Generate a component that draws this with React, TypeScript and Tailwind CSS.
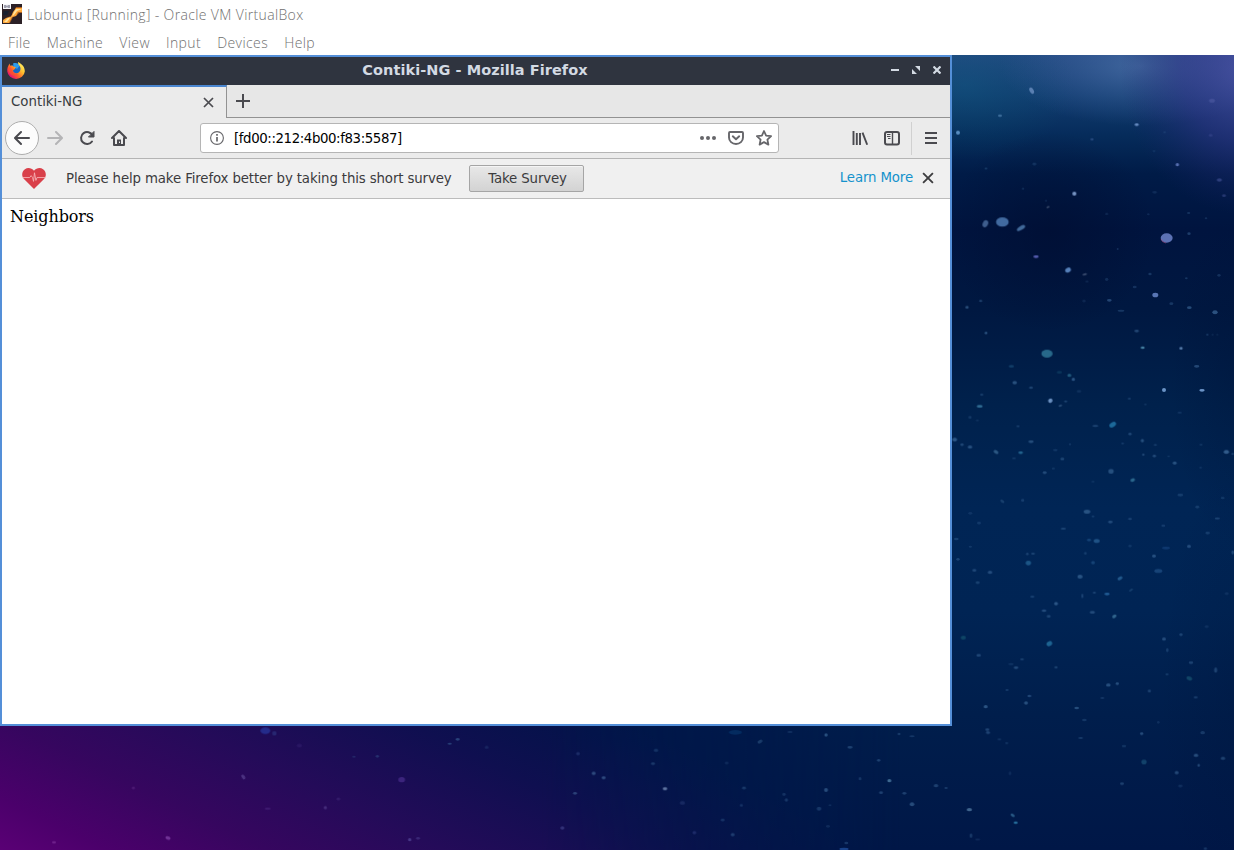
import React from "react";

type Star = [x: number, y: number, rx: number, ry: number, opacity: number, color?: string, angle?: number];

const UPPER: Star[] = [
  [305, 122, 10, 6, 0.75, "#7f9fd0", 60], [210, 197, 6, 4, 0.7, "#5a8ab8"], [84, 248, 6, 6, 0.9, "#6ea6dc"],
  [620, 224, 6, 4, 0.9, "#7fa4dc"], [486, 268, 5, 4, 0.5, "#4d6eaa"], [846, 152, 9, 6, 0.6, "#5560a8"],
  [842, 256, 6, 4, 0.35, "#5560a8"], [742, 344, 5, 5, 0.8, "#7890d8"], [868, 390, 8, 5, 0.6, "#4d5ca0"],
  [882, 437, 6, 4, 0.5, "#4d5ca0"], [704, 247, 4, 3, 0.3], [672, 303, 4, 3, 0.3], [313, 342, 6, 4, 0.35],
  [168, 355, 4, 3, 0.45], [279, 416, 3, 3, 0.4], [348, 452, 3, 2, 0.4], [354, 471, 5, 3, 0.55, "#6f7f98", -20],
  [433, 431, 6, 6, 0.95, "#8fb0e0"], [166, 521, 11, 8, 0.75, "#5f86b8", -65], [217, 516, 19, 14, 0.95, "#4f7cb4"],
  [273, 534, 14, 6, 0.8, "#5c8fc2", -32], [318, 620, 8, 4, 0.85, "#7277d8"], [414, 660, 9, 7, 0.9, "#6b9ddc", -30],
  [464, 673, 7, 3, 0.55, "#7182a0", -15], [710, 564, 18, 14, 0.95, "#6f86cc"], [777, 551, 5, 4, 0.5],
  [776, 489, 5, 3, 0.35], [530, 492, 5, 3, 0.3], [655, 493, 4, 3, 0.25], [828, 505, 4, 3, 0.3],
  [563, 597, 3, 3, 0.35], [530, 688, 5, 5, 0.3], [660, 672, 5, 4, 0.4], [614, 711, 6, 4, 0.35],
  [676, 735, 9, 7, 0.9, "#708fd4"], [538, 751, 7, 4, 0.6], [573, 782, 10, 3, 0.4], [724, 761, 6, 4, 0.4],
  [778, 773, 7, 4, 0.65], [855, 787, 8, 6, 0.75], [867, 676, 5, 4, 0.35], [769, 685, 4, 3, 0.4],
  [152, 753, 5, 3, 0.6], [111, 772, 5, 4, 0.7], [462, 753, 5, 4, 0.25], [674, 427, 7, 4, 0.25], [471, 695, 5, 3, 0.25],
];

const MIDDLE: Star[] = [
  [168, 39, 4, 4, 0.75], [351, 101, 17, 12, 0.95, "#2f7898"], [244, 139, 8, 4, 0.5, "#27668f"], [254, 188, 7, 5, 0.7],
  [303, 203, 6, 4, 0.5], [418, 166, 6, 5, 0.7, "#337c9b"], [430, 178, 5, 5, 0.75], [388, 157, 8, 4, 0.35, "#236b86"],
  [155, 224, 5, 4, 0.4], [149, 259, 9, 4, 0.85, "#4186ab"], [361, 242, 7, 6, 0.95, "#7fa6d8", -35],
  [391, 257, 6, 3, 0.5, "#547aa3", -25], [407, 244, 5, 3, 0.5], [447, 214, 7, 4, 0.25], [120, 292, 5, 4, 0.35],
  [142, 301, 5, 3, 0.25], [264, 319, 5, 3, 0.4], [303, 365, 8, 4, 0.65], [272, 398, 7, 4, 0.75, "#3687b0"],
  [198, 396, 8, 5, 0.7, "#4779a4", 35], [120, 381, 7, 5, 0.65], [96, 374, 5, 4, 0.55], [74, 359, 7, 6, 0.75],
  [397, 417, 6, 4, 0.5], [376, 390, 7, 3, 0.35], [252, 415, 6, 3, 0.3], [344, 458, 6, 4, 0.6],
  [370, 446, 5, 3, 0.3], [420, 373, 4, 3, 0.3], [496, 318, 9, 3, 0.55], [548, 314, 11, 7, 0.9, "#237cae", -32],
  [600, 342, 5, 4, 0.55], [637, 362, 5, 5, 0.65], [676, 375, 5, 3, 0.4], [640, 404, 4, 4, 0.5], [673, 408, 5, 4, 0.6],
  [734, 429, 6, 5, 0.7], [716, 409, 4, 2, 0.4], [620, 33, 7, 4, 0.6], [638, 83, 6, 4, 0.85, "#5ba0bf"],
  [753, 85, 5, 4, 0.9, "#6b94c3"], [800, 139, 8, 4, 0.6], [702, 210, 6, 6, 0.95, "#7fabdf"],
  [816, 211, 8, 4, 0.95, "#7fabdf"], [598, 236, 5, 3, 0.4], [646, 253, 4, 3, 0.3], [749, 278, 7, 3, 0.3],
  [889, 396, 8, 6, 0.85], [908, 402, 4, 3, 0.5], [578, 370, 4, 3, 0.4], [543, 454, 8, 7, 0.65],
  [608, 480, 7, 5, 0.8, "#3c83a5", -20], [489, 485, 5, 3, 0.25], [471, 575, 10, 6, 0.7], [541, 606, 7, 4, 0.6],
  [600, 597, 6, 3, 0.5], [489, 589, 4, 3, 0.4], [751, 525, 9, 4, 0.4], [802, 561, 6, 4, 0.4], [862, 595, 8, 3, 0.5],
  [833, 639, 7, 4, 0.4], [700, 617, 6, 4, 0.35], [400, 626, 8, 3, 0.5], [500, 663, 9, 6, 0.9, "#285f94"],
  [477, 660, 6, 4, 0.6, "#285f94"], [600, 678, 5, 4, 0.3], [777, 679, 6, 5, 0.6], [708, 684, 12, 4, 0.6, "#1d4c8a"],
  [672, 708, 6, 5, 0.65], [685, 753, 12, 6, 0.7, "#26598f"], [466, 700, 4, 4, 0.4], [489, 728, 6, 5, 0.6, "#285f94"],
  [450, 770, 8, 6, 0.7], [570, 775, 8, 5, 0.75, "#3474a8", -30], [295, 729, 8, 7, 0.8, "#286c9c"],
  [292, 702, 4, 4, 0.45], [309, 701, 6, 3, 0.5], [180, 757, 7, 5, 0.6], [133, 751, 6, 4, 0.55],
  [217, 544, 7, 4, 0.5, "#36628d", 35], [278, 541, 5, 4, 0.4], [147, 609, 6, 4, 0.35], [79, 657, 7, 4, 0.4],
  [84, 718, 5, 4, 0.45], [121, 580, 6, 4, 0.25], [848, 44, 3, 2, 0.35], [832, 44, 4, 3, 0.4], [862, 44, 3, 2, 0.3],
  [878, 534, 6, 3, 0.4], [908, 697, 4, 6, 0.5], [813, 374, 5, 3, 0.3], [812, 443, 4, 3, 0.3], [121, 680, 5, 3, 0.3],
];

const LOWER: Star[] = [
  [307, 50, 6, 4, 0.4], [378, 71, 6, 5, 0.75], [342, 92, 7, 4, 0.6], [356, 109, 6, 4, 0.5], [457, 48, 3, 7, 0.5],
  [493, 38, 5, 3, 0.5], [531, 42, 8, 4, 0.85, "#2d6eaa"], [487, 97, 8, 4, 0.6], [553, 109, 7, 5, 0.75, "#4a85aa", -35],
  [603, 30, 7, 3, 0.45, "#386994", -35], [100, 173, 8, 6, 0.6, "#1a6478"], [358, 191, 9, 7, 0.8, "#2a7fac", -30],
  [146, 226, 7, 4, 0.55], [258, 263, 7, 4, 0.6], [276, 238, 6, 3, 0.45], [243, 252, 8, 3, 0.3], [378, 262, 5, 4, 0.45],
  [702, 177, 6, 5, 0.6], [753, 164, 5, 4, 0.5], [712, 210, 4, 6, 0.4], [783, 248, 7, 4, 0.5], [857, 270, 5, 8, 0.5],
  [778, 295, 9, 6, 0.55, "#256f83", 25], [711, 283, 5, 3, 0.4], [797, 352, 6, 4, 0.4], [658, 333, 5, 4, 0.5],
  [535, 315, 7, 5, 0.65], [562, 311, 5, 4, 0.65], [167, 380, 6, 5, 0.75], [288, 369, 6, 5, 0.65], [298, 348, 6, 4, 0.55],
  [231, 330, 5, 3, 0.4], [440, 384, 7, 4, 0.65], [463, 420, 7, 4, 0.35], [172, 449, 6, 4, 0.55], [174, 458, 6, 4, 0.55],
  [208, 478, 6, 3, 0.3], [230, 489, 5, 3, 0.35], [452, 474, 7, 3, 0.4], [635, 461, 5, 4, 0.65], [582, 498, 7, 3, 0.4],
  [642, 546, 8, 7, 0.65, "#205f83"], [576, 611, 6, 4, 0.5], [740, 578, 6, 5, 0.6], [798, 526, 7, 5, 0.65],
  [806, 556, 4, 4, 0.6], [879, 535, 7, 5, 0.5], [818, 458, 7, 5, 0.4], [751, 618, 7, 4, 0.3], [685, 427, 4, 4, 0.25],
  [18, 617, 7, 5, 0.5], [48, 624, 5, 3, 0.45], [118, 689, 8, 5, 0.85, "#547da3"], [248, 706, 7, 4, 0.8, "#3a759f", 35],
  [257, 728, 6, 4, 0.95, "#2e81ae"], [123, 767, 4, 7, 0.45], [240, 580, 4, 6, 0.25], [826, 806, 5, 4, 0.4],
  [143, 8, 6, 4, 0.45], [830, 140, 6, 4, 0.25], [890, 41, 6, 4, 0.25], [517, 354, 6, 3, 0.35], [143, 778, 8, 3, 0.25],
];

const FLOOR_LEFT: Star[] = [
  [796, 92, 15, 10, 0.85, "#27369b"], [823, 100, 7, 7, 0.5, "#354993"], [898, 137, 8, 6, 0.25, "#533a95"],
  [730, 231, 8, 5, 0.65, "#65519e", 55], [400, 264, 5, 4, 0.4, "#79409b"], [1205, 239, 10, 8, 0.85, "#482d8b"],
  [976, 323, 5, 5, 0.55, "#65519e"], [1015, 297, 6, 4, 0.3, "#65519e"], [803, 326, 9, 4, 0.35, "#65419e"],
  [504, 414, 8, 5, 0.75, "#8a4baf", 20], [162, 427, 6, 4, 0.5, "#9547af"], [1229, 419, 5, 5, 0.65, "#6259aa"],
  [1254, 415, 6, 4, 0.4, "#6259aa"], [1132, 169, 5, 4, 0.4], [1062, 170, 5, 3, 0.3], [1349, 131, 6, 3, 0.55],
  [1373, 118, 6, 4, 0.6],
];

const FLOOR_RIGHT: Star[] = [
  [20, 142, 6, 5, 0.25], [294, 161, 6, 5, 0.4, "#445d9c"], [528, 151, 7, 5, 0.35], [519, 191, 6, 4, 0.45],
  [341, 220, 6, 5, 0.75, "#436798"], [371, 233, 6, 5, 0.75, "#436798"], [285, 280, 6, 4, 0.65, "#436798"],
  [247, 384, 6, 5, 0.55, "#5455a0"], [555, 266, 7, 5, 0.95, "#6f86b0"], [607, 309, 8, 6, 0.35, "#435994"],
  [643, 398, 6, 5, 0.4, "#4858a0"], [728, 360, 6, 4, 0.4], [758, 404, 6, 5, 0.5], [784, 316, 5, 4, 0.35],
  [792, 264, 6, 4, 0.45], [840, 125, 8, 5, 0.5, "#396692", -30], [766, 97, 20, 7, 0.65, "#083b70"],
  [1038, 105, 5, 5, 0.7], [1110, 142, 8, 4, 0.5], [1140, 236, 4, 5, 0.4], [1196, 181, 5, 4, 0.5],
  [1228, 242, 6, 5, 0.8, "#578bb0"], [1203, 278, 6, 4, 0.5], [1273, 280, 6, 4, 0.5], [1296, 313, 7, 6, 0.65],
  [1038, 270, 6, 6, 0.65], [1017, 326, 7, 6, 0.4], [1050, 316, 4, 3, 0.3], [912, 283, 5, 5, 0.35],
  [919, 300, 5, 5, 0.4], [1296, 109, 8, 3, 0.35], [1257, 102, 4, 4, 0.45], [930, 96, 8, 3, 0.3],
  [1092, 447, 14, 4, 0.7, "#285cb4"], [1099, 429, 6, 4, 0.4], [740, 189, 6, 4, 0.25], [1044, 379, 6, 4, 0.25],
];

const SECTORS: { origin: [number, number]; stars: Star[] }[] = [
  { origin: [930, 50], stars: UPPER },
  { origin: [930, 320], stars: MIDDLE },
  { origin: [930, 580], stars: LOWER },
  { origin: [0, 700], stars: FLOOR_LEFT },
  { origin: [480, 700], stars: FLOOR_RIGHT },
];

function Wallpaper() {
  return (
    <svg className="absolute inset-0 size-full" viewBox="0 55 1234 795" aria-hidden="true">
      <defs>
        <linearGradient id="sky" gradientUnits="userSpaceOnUse" x1="0" y1="55" x2="0" y2="850">
          <stop offset="0" stopColor="#244a83" />
          <stop offset=".05" stopColor="#123d71" />
          <stop offset=".1" stopColor="#062c5b" />
          <stop offset=".15" stopColor="#001b47" />
          <stop offset=".22" stopColor="#00143f" />
          <stop offset=".32" stopColor="#001841" />
          <stop offset=".44" stopColor="#00214c" />
          <stop offset=".57" stopColor="#002555" />
          <stop offset=".7" stopColor="#002454" />
          <stop offset=".83" stopColor="#001e4c" />
          <stop offset="1" stopColor="#001747" />
        </linearGradient>
        <linearGradient id="magenta" gradientUnits="userSpaceOnUse" x1="0" y1="850" x2="170" y2="500">
          <stop offset="0" stopColor="#5a0075" />
          <stop offset=".12" stopColor="#4b006b" />
          <stop offset=".3" stopColor="#36065f" />
          <stop offset=".5" stopColor="#240b59" />
          <stop offset=".75" stopColor="#0f0f50" />
          <stop offset="1" stopColor="#001448" />
        </linearGradient>
        <linearGradient id="fade" gradientUnits="userSpaceOnUse" x1="0" y1="0" x2="900" y2="0">
          <stop offset="0" stopColor="#fff" />
          <stop offset=".6" stopColor="#fff" />
          <stop offset="1" stopColor="#000" />
        </linearGradient>
        <mask id="floorMask" maskUnits="userSpaceOnUse" x="0" y="720" width="900" height="130">
          <rect y="720" width="900" height="130" fill="url(#fade)" />
        </mask>
        <radialGradient id="mist">
          <stop offset="0" stopColor="#4b70a8" stopOpacity=".75" />
          <stop offset="1" stopColor="#375c98" stopOpacity="0" />
        </radialGradient>
        <radialGradient id="violet">
          <stop offset="0" stopColor="#5052a8" stopOpacity=".75" />
          <stop offset=".5" stopColor="#35338a" stopOpacity=".5" />
          <stop offset="1" stopColor="#1c2067" stopOpacity="0" />
        </radialGradient>
        <radialGradient id="teal">
          <stop offset="0" stopColor="#0f5a80" stopOpacity=".45" />
          <stop offset="1" stopColor="#07516f" stopOpacity="0" />
        </radialGradient>
        <radialGradient id="abyss">
          <stop offset="0" stopColor="#000d30" stopOpacity=".6" />
          <stop offset="1" stopColor="#000d30" stopOpacity="0" />
        </radialGradient>
      </defs>
      <rect y="55" width="1234" height="795" fill="url(#sky)" />
      <ellipse cx="965" cy="85" rx="110" ry="75" fill="url(#teal)" />
      <ellipse cx="1140" cy="66" rx="140" ry="60" fill="url(#mist)" />
      <ellipse cx="1245" cy="70" rx="125" ry="145" fill="url(#violet)" />
      <ellipse cx="1050" cy="232" rx="105" ry="100" fill="url(#abyss)" />
      <ellipse cx="1240" cy="380" rx="70" ry="170" fill="url(#abyss)" opacity=".4" />
      <ellipse cx="1240" cy="700" rx="80" ry="240" fill="url(#abyss)" opacity=".3" />
      <rect y="720" width="900" height="130" fill="url(#magenta)" mask="url(#floorMask)" />
      {SECTORS.map(({ origin: [ox, oy], stars }) => (
        <g key={`${ox}-${oy}`} className="blur-[0.6px]" opacity=".88">
          <g transform={`translate(${ox} ${oy}) scale(.33333)`}>
            {stars.map(([x, y, rx, ry, opacity, color = "#4270a0", angle = 0], i) => (
              <ellipse key={i} cx={x} cy={y} rx={rx} ry={ry} fill={color} opacity={opacity} transform={`rotate(${angle} ${x} ${y})`} />
            ))}
          </g>
        </g>
      ))}
      <path d="M1161 239a6 5 0 0 0 5 4" fill="none" stroke="#b65387" opacity=".5" />
    </svg>
  );
}

function VirtualBoxIcon() {
  return (
    <svg className="size-5" viewBox="0 0 20 20">
      <path fill="#2b2026" d="M0 0h20v20H0z" />
      <path fill="#a85d20" d="M14 3h6v6h-3l-3 3-3 1-3 6H4v-5l5-2 3-4Z" />
      <path fill="#ffa93a" d="M14 4h6v4h-4l-2 4-4 1-3 6H1v-3l3-2 5-1 2-5Z" />
      <path fill="#ffe3a0" d="M14 5h6l-5 2-3 4-4 3-3 4H2l4-4 4-1 2-5Z" />
      <path fill="#f7f7fa" d="M1 0h8v5H1z" />
      <path stroke="#44465f" d="M3 1v3M5 1.500v2M7 1v3" />
      <path fill="#171f30" d="M2 7h5l-2 4H1z" />
    </svg>
  );
}

function FirefoxIcon() {
  return (
    <svg className="size-[18px]" viewBox="0 0 18 18">
      <defs>
        <linearGradient id="fox" x1=".9" y1=".1" x2=".15" y2=".8">
          <stop stopColor="#fff36b" />
          <stop offset=".35" stopColor="#ffc12e" />
          <stop offset=".65" stopColor="#ff6b26" />
          <stop offset="1" stopColor="#e8186c" />
        </linearGradient>
      </defs>
      <circle cx="8.7" cy="8.2" r="6.2" fill="#1768c2" />
      <path fill="#2b9ced" d="M6 1.400c3-1 6 0 7 2L10 7 7 5Z" />
      <path fill="url(#fox)" d="M11 0c4 2 7 5 6.800 9.500A8.800 8.300 0 0 1 .300 9.500C0 6.500 1 4 2.500 1.500l.7 2.300c1.200-.6 2.500-.3 3.400.6L9 5.600 7.300 7.500 6 8.500c.5 2.800 4 3.600 6 1.700 2-2 1.800-4.700.7-6.300C11.400 3 11 1.500 11 0Z" />
      <path fill="#ff4d2e" d="M1 6c.2 4 2.500 7 6 7.600 2 .4 3.600-.3 4.700-1.400C8.500 13 5.300 11.500 5 8.400L3.300 5Z" opacity=".75" />
    </svg>
  );
}

function Cross({ className, size = 11 }: { className?: string; size?: number }) {
  return (
    <svg className={className} width={size} height={size} viewBox="0 0 11 11" fill="none" stroke="currentColor" strokeWidth="1.7">
      <path d="m1 1 9 9m0-9-9 9" />
    </svg>
  );
}

const ICON = "size-4 shrink-0";

function BackIcon() {
  return (
    <svg className={ICON} viewBox="0 0 16 16" fill="none" stroke="currentColor" strokeWidth="2" strokeLinecap="round" strokeLinejoin="round">
      <path d="M15 8H1.500M7 2 1 8l6 6" />
    </svg>
  );
}

function ForwardIcon() {
  return (
    <svg className={ICON} viewBox="0 0 16 16" fill="none" stroke="currentColor" strokeWidth="2" strokeLinecap="round" strokeLinejoin="round">
      <path d="M1 8h13.500M9 2l6 6-6 6" />
    </svg>
  );
}

function ReloadIcon() {
  return (
    <svg className={ICON} viewBox="0 0 16 16" fill="none" stroke="currentColor" strokeWidth="2" strokeLinecap="round">
      <path d="M13.500 5.500A6 6 0 1 0 13 11.500" />
      <path d="M15 1.800V7H9.800Z" fill="currentColor" strokeWidth="1" strokeLinejoin="round" />
    </svg>
  );
}

function HomeIcon() {
  return (
    <svg className={ICON} viewBox="0 0 16 16" fill="none" stroke="currentColor" strokeWidth="2" strokeLinecap="round" strokeLinejoin="round">
      <path d="m1 8 7-7 7 7M3 8v7h10V8" />
      <path d="M6 9.500h4V15H6z" fill="currentColor" stroke="none" />
      <path d="M8.500 11.500v1.500" stroke="#eee" strokeWidth="1" strokeLinecap="butt" />
    </svg>
  );
}

function InfoIcon() {
  return (
    <svg className="size-3.5 shrink-0" viewBox="0 0 14 14" fill="none" stroke="currentColor">
      <circle cx="7" cy="7" r="6.400" strokeWidth="1.100" />
      <path d="M7 6v4.500M7 3v1.700" strokeWidth="1.700" />
    </svg>
  );
}

function DotsIcon() {
  return (
    <svg className={ICON} viewBox="0 0 16 16" fill="currentColor">
      <circle cx="2" cy="8" r="2" />
      <circle cx="8" cy="8" r="2" />
      <circle cx="14" cy="8" r="2" />
    </svg>
  );
}

function PocketIcon() {
  return (
    <svg className={ICON} viewBox="0 0 16 16" fill="none" stroke="currentColor" strokeWidth="1.900" strokeLinecap="round" strokeLinejoin="round">
      <path d="M2 2h12a1 1 0 0 1 1 1v4.500a7 6.500 0 0 1-14 0V3a1 1 0 0 1 1-1Z" />
      <path d="m4.800 6.300 3.200 3 3.200-3" />
    </svg>
  );
}

function StarIcon() {
  return (
    <svg className={ICON} viewBox="0 0 16 16" fill="none" stroke="currentColor" strokeWidth="1.800" strokeLinejoin="round">
      <path d="m8 1 2.100 4.600 5 .6-3.700 3.400 1 5L8 12.100l-4.400 2.500 1-5L.900 6.200l5-.6Z" />
    </svg>
  );
}

function LibraryIcon() {
  return (
    <svg className={ICON} viewBox="0 0 16 16" fill="none" stroke="currentColor" strokeWidth="1.900">
      <path d="M1.500 1v14M8 3v12M10.500 2.700 15.200 14.700" />
      <path d="M4.800 3v12" />
    </svg>
  );
}

function SidebarIcon() {
  return (
    <svg className={ICON} viewBox="0 0 16 16" fill="none" stroke="currentColor">
      <rect x="1" y="2" width="14" height="12.500" rx="2" strokeWidth="2" />
      <path d="M8.500 2v12" strokeWidth="1.400" />
      <path d="M3 4.500h3.500M3 6.500h3.500M4 8.500h2.500" />
    </svg>
  );
}

function MenuIcon() {
  return (
    <svg className={ICON} viewBox="0 0 16 16" fill="none" stroke="currentColor" strokeWidth="2">
      <path d="M2 3h12M2 8h12M2 13h12" />
    </svg>
  );
}

function HeartIcon() {
  return (
    <svg className="-mt-px h-[21px] w-6 shrink-0" viewBox="0 0 25 22">
      <path fill="#d9404a" d="M12.500 22 2 11.500C-1 8-.200 3.500 3 1.200 6-.800 10-.200 12.500 3 15-.200 19-.800 22 1.200c3.200 2.300 4 6.800 1 10.300Z" />
      <path fill="none" stroke="#f7b4b7" strokeWidth=".900" d="M.500 10H8l1.500-2 1.500 2 1 4 1-9 1.500 8 1.200-3h9" />
    </svg>
  );
}

function TitleBar() {
  return (
    <div className="flex h-7 items-center bg-[#2f343f] pr-[9px] pl-[5px] text-[#d3dae3]">
      <FirefoxIcon />
      <h1 className="mt-[-2px] flex-1 pl-[34px] text-center text-[14.5px] leading-5 font-bold tracking-[0.06px]">Contiki-NG - Mozilla Firefox</h1>
      <div className="-mt-0.5 flex items-center gap-[13px]">
        <svg className="size-2" viewBox="0 0 8 8"><path d="M0 3h8v2H0z" fill="currentColor" /></svg>
        <svg className="size-2" viewBox="0 0 8 8" fill="currentColor"><path d="M3 0h5v5ZM0 3v5h5Z" /></svg>
        <svg className="size-2" viewBox="0 0 8 8" stroke="currentColor" strokeWidth="2.200"><path d="m.500.500 7 7m0-7-7 7" /></svg>
      </div>
    </div>
  );
}

function TabStrip() {
  return (
    <div className="flex h-[33px] bg-[#e7e7e7] text-[#4a4a4f]">
      <div className="flex w-[225px] items-center justify-between border-t-2 border-r border-t-[#4a86d0] border-r-[#929292] bg-[#ebebeb] pr-3 pl-[9px]">
        <span className="-mt-0.5 text-[13.33px] leading-4 text-[#383c40]">Contiki-NG</span>
        <Cross />
      </div>
      <div className="flex-1 border-b border-[#929292] pt-[9px] pl-[9px]">
        <svg className="size-3.5" viewBox="0 0 14 14" stroke="currentColor" strokeWidth="2"><path d="M7 0v14M0 7h14" /></svg>
      </div>
    </div>
  );
}

function NavBar() {
  return (
    <div className="flex h-[41px] items-center border-b border-[#b4b4b4] bg-[#ebebeb] pl-[3px] text-[#4a4a4f]">
      <button className="flex size-[34px] items-center justify-center rounded-full border border-[#adadad] bg-[#fcfcfc]">
        <BackIcon />
      </button>
      <div className="ml-2 flex gap-4">
        <span className="text-[#b4b4b6]"><ForwardIcon /></span>
        <ReloadIcon />
        <HomeIcon />
      </div>
      <div className="ml-[73px] flex h-[30px] w-[579px] items-center rounded-[3px] border border-[#b5b5b5] bg-white pr-1.5 pl-[9px] text-[#66666a]">
        <InfoIcon />
        <span className="mt-0.5 ml-2.5 flex-1 text-[13.33px] tracking-[-0.4px] text-black">[fd00::212:4b00:f83:5587]</span>
        <div className="flex gap-3">
          <DotsIcon />
          <PocketIcon />
          <StarIcon />
        </div>
      </div>
      <div className="ml-[73px] flex gap-4">
        <LibraryIcon />
        <SidebarIcon />
      </div>
      <div className="ml-[11px] flex h-[33px] items-center border-l border-[#d0d0d0] pl-[11px]">
        <MenuIcon />
      </div>
    </div>
  );
}

function SurveyBar() {
  return (
    <div className="flex h-10 items-center border-b border-[#bcbcbc] bg-[#f0f0f0] pr-4 pl-5 text-[13.33px] tracking-[-0.13px] text-[#3b3b3d]">
      <HeartIcon />
      <span className="ml-5 w-[403px] whitespace-nowrap">Please help make Firefox better by taking this short survey</span>
      <button className="h-[27px] w-[115px] rounded-xs border border-[#a5a5a5] bg-linear-to-b from-[#e8e8e8] to-[#d3d3d3] pl-0.5 shadow-[inset_0_1px_0_#f5f5f5]">Take Survey</button>
      <span className="mr-[9px] ml-auto -mt-[2px] text-[#1492cc]">Learn More</span>
      <Cross className="-mt-px text-[#3d3d3f]" size={12} />
    </div>
  );
}

const MENUS = ["File", "Machine", "View", "Input", "Devices", "Help"];

export default function App() {
  return (
    <div className="flex h-[850px] w-[1234px] flex-col overflow-hidden bg-white font-['DejaVu_Sans',sans-serif]">
      <header className="h-[55px] font-['Open_Sans',sans-serif] text-[14px] font-light text-[#707070]">
        <div className="flex h-7 items-center gap-[5px] pl-[2px]">
          <VirtualBoxIcon />
          <span className="tracking-[0.36px] whitespace-nowrap">Lubuntu [Running] - Oracle VM VirtualBox</span>
        </div>
        <nav className="flex gap-4 pt-1 pl-2 tracking-[0.42px]">
          {MENUS.map((name) => <span key={name}>{name}</span>)}
        </nav>
      </header>
      <main className="relative min-h-0 flex-1 bg-[#001a48]">
        <Wallpaper />
        <section className="relative flex h-[671px] w-[952px] flex-col border-2 border-[#548fd8] bg-white">
          <TitleBar />
          <TabStrip />
          <NavBar />
          <SurveyBar />
          <article className="px-2 pt-1.5 font-['DejaVu_Serif',serif] text-base tracking-[-0.1px] text-black">Neighbors</article>
        </section>
      </main>
    </div>
  );
}
